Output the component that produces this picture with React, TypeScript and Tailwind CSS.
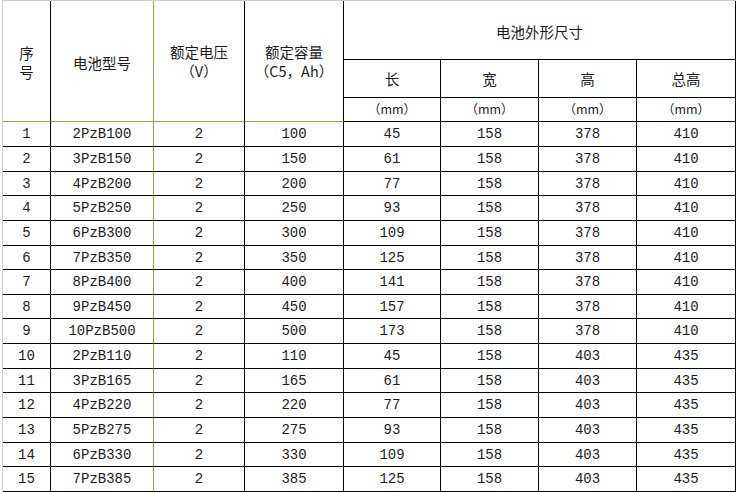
const rows: (string | number)[][] = [
  [1, '2PzB100', 2, 100, 45, 158, 378, 410],
  [2, '3PzB150', 2, 150, 61, 158, 378, 410],
  [3, '4PzB200', 2, 200, 77, 158, 378, 410],
  [4, '5PzB250', 2, 250, 93, 158, 378, 410],
  [5, '6PzB300', 2, 300, 109, 158, 378, 410],
  [6, '7PzB350', 2, 350, 125, 158, 378, 410],
  [7, '8PzB400', 2, 400, 141, 158, 378, 410],
  [8, '9PzB450', 2, 450, 157, 158, 378, 410],
  [9, '10PzB500', 2, 500, 173, 158, 378, 410],
  [10, '2PzB110', 2, 110, 45, 158, 403, 435],
  [11, '3PzB165', 2, 165, 61, 158, 403, 435],
  [12, '4PzB220', 2, 220, 77, 158, 403, 435],
  [13, '5PzB275', 2, 275, 93, 158, 403, 435],
  [14, '6PzB330', 2, 330, 109, 158, 403, 435],
  [15, '7PzB385', 2, 385, 125, 158, 403, 435],
];

const cjk = "font-['Noto_Sans_CJK_SC',sans-serif]";
const mono = "font-['Liberation_Mono','Noto_Sans_CJK_SC',monospace]";

// base cell: right + bottom rule, content centred
const cell = 'flex items-center justify-center border-r border-b border-black text-center';
const olive = 'border-[#97a04c]';

export default function App() {
  return (
    <div className="w-[736px] h-[492px] bg-white text-[#1c1c1c] overflow-hidden">
      <div className="ml-[2px] border-l border-t border-l-[#cfcfcf] border-t-[#cfcfcf] grid grid-cols-[48px_103px_91px_99px_97px_98px_98px_99px] grid-rows-[59px_38px_24px_25px_25px_24px_25px_25px_24px_25px_24px_25px_25px_24px_25px_25px_24px_25px]">
        {/* header */}
        <div className={`${cell} row-span-3 border-b-[#97a04c] ${cjk} text-[14.5px] leading-[19px] flex-col pt-[2px]`}>
          <span>序</span>
          <span>号</span>
        </div>
        <div className={`${cell} row-span-3 border-r-[#97a04c] border-b-[#97a04c] ${cjk} text-[14.5px] pt-[3px]`}>
          电池型号
        </div>
        <div className={`${cell} row-span-3 border-b-[#97a04c] ${cjk} text-[14.5px] leading-[19px] flex-col`}>
          <span>额定电压</span>
          <span>（V）</span>
        </div>
        <div className={`${cell} row-span-3 border-b-[#97a04c] ${cjk} text-[14.5px] leading-[19px] flex-col`}>
          <span>额定容量</span>
          <span>（C5，Ah）</span>
        </div>
        <div className={`${cell} col-span-4 ${cjk} text-[14.5px] pt-[3px]`}>电池外形尺寸</div>

        {['长', '宽', '高', '总高'].map((t) => (
          <div key={t} className={`${cell} ${cjk} text-[14.5px]`}>
            {t}
          </div>
        ))}
        {[0, 1, 2, 3].map((i) => (
          <div key={i} className={`${cell} ${olive} border-r-black ${cjk} text-[12.5px]`}>
            （mm）
          </div>
        ))}

        {/* data */}
        {rows.map((r) =>
          r.map((v, j) => (
            <div
              key={`${r[0]}-${j}`}
              className={`${cell} ${j === 1 ? 'border-r-[#97a04c]' : ''} ${mono} text-[14px] pt-[1px]`}
            >
              {v}
            </div>
          ))
        )}
      </div>
    </div>
  );
}
